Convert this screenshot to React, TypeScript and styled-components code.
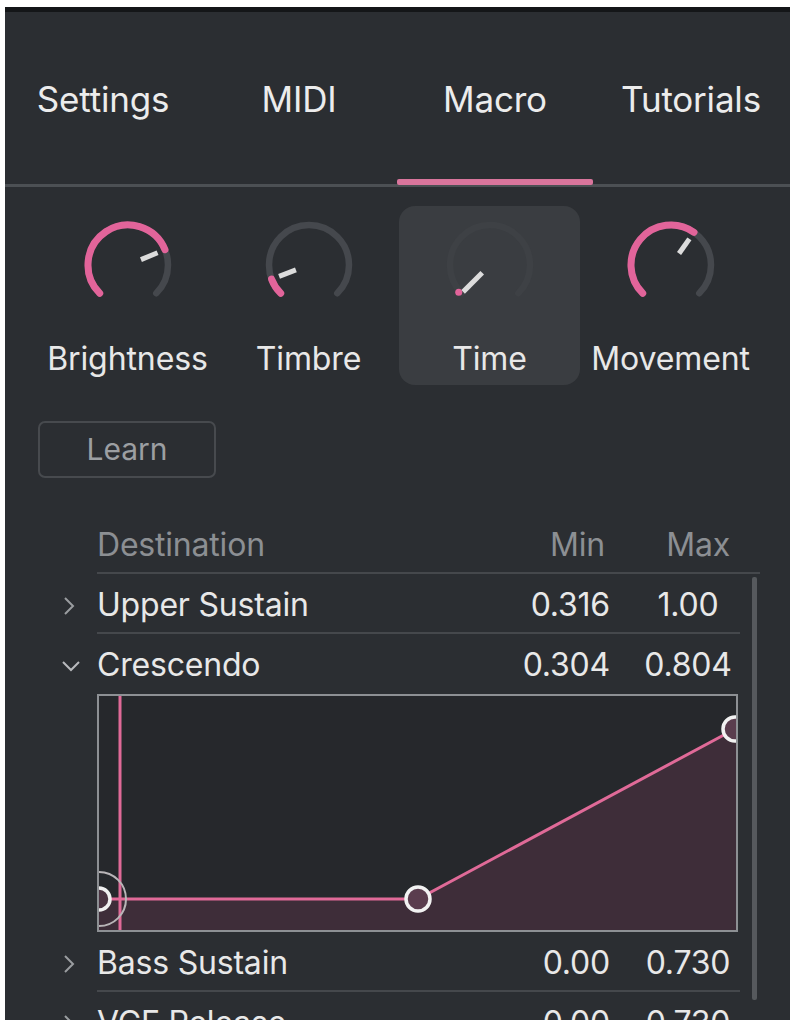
import React from "react";
import styled, { createGlobalStyle } from "styled-components";

const GlobalStyle = createGlobalStyle`
  html, body { margin: 0; padding: 0; background: #ffffff; }
  body { font-family: Inter, "Noto Sans", sans-serif; }
  * { box-sizing: border-box; }
`;

const PINK = "#e2649a";

const Page = styled.div`
  padding: 7px 3px 0 5px;
  height: 1029px;
  overflow: hidden;
`;

const Panel = styled.div`
  width: 785px;
  height: 1013px;
  background: #2b2e32;
  border-top: 5px solid #141618;
  overflow: hidden;
  display: flex;
  flex-direction: column;
  position: relative;
`;

const TabBar = styled.div`
  display: grid;
  grid-template-columns: repeat(4, 196px);
  height: 175px;
  border-bottom: 3px solid #4c5054;
  flex-shrink: 0;
`;

const Tab = styled.div<{ $active?: boolean }>`
  position: relative;
  display: flex;
  align-items: center;
  justify-content: center;
  font-size: 35px;
  color: #ececec;
  letter-spacing: -0.2px;
  padding-top: 2px;
  &::after {
    content: "";
    display: ${(p) => (p.$active ? "block" : "none")};
    position: absolute;
    left: 0;
    right: 0;
    bottom: -1px;
    height: 6px;
    background: #d9759c;
    border-radius: 2px;
  }
`;

const KnobRow = styled.div`
  display: grid;
  grid-template-columns: repeat(4, 181px);
  padding: 19px 0 0 32px;
  flex-shrink: 0;
`;

const KnobCard = styled.div<{ $selected?: boolean }>`
  height: 179px;
  border-radius: 16px;
  background: ${(p) => (p.$selected ? "#3a3d41" : "transparent")};
  display: flex;
  flex-direction: column;
  align-items: center;
  padding-top: 9px;
`;

const KnobLabel = styled.div`
  margin-top: 28px;
  font-size: 32px;
  color: #e8e8e8;
  letter-spacing: -0.1px;
  line-height: 1;
`;

const LearnButton = styled.button`
  margin: 36px 0 0 33px;
  width: 178px;
  height: 57px;
  border: 2px solid #474a4e;
  border-radius: 7px;
  background: transparent;
  color: #9c9fa2;
  font-family: Inter, "Noto Sans", sans-serif;
  font-size: 30px;
  padding: 0 0 2px 0;
  flex-shrink: 0;
`;

const Table = styled.div`
  position: relative;
  margin: 41px 0 0 50px;
  width: 705px;
  flex-shrink: 0;
`;

const HeaderRow = styled.div`
  display: grid;
  grid-template-columns: 1fr 136px 124px;
  align-items: center;
  height: 55px;
  margin-left: 42px;
  border-bottom: 2px solid #45484c;
  color: #8c8f93;
  font-size: 32px;
  letter-spacing: -0.2px;
`;

const HeadCell = styled.div<{ $right?: number }>`
  text-align: ${(p) => (p.$right !== undefined ? "right" : "left")};
  padding-right: ${(p) => p.$right ?? 0}px;
  padding-bottom: 2px;
`;

const Row = styled.div`
  display: flex;
  align-items: stretch;
  height: 60px;
  margin-right: 20px;
`;

const ChevronBox = styled.div`
  width: 42px;
  display: flex;
  align-items: center;
  padding-left: 6px;
  padding-top: 4px;
`;

const RowBody = styled.div<{ $line?: boolean }>`
  flex: 1;
  display: grid;
  grid-template-columns: 1fr 136px 104px;
  align-items: center;
  border-bottom: ${(p) => (p.$line ? "2px solid #45484c" : "2px solid transparent")};
  color: #e8e8e8;
  font-size: 32px;
  letter-spacing: -0.2px;
  padding-top: 5px;
`;

const Cell = styled.div<{ $align?: "left" | "right" | "center"; $pr?: number }>`
  text-align: ${(p) => p.$align ?? "left"};
  padding-right: ${(p) => p.$pr ?? 0}px;
  padding-bottom: 2px;
  white-space: nowrap;
`;

const GraphWrap = styled.div`
  margin-left: 42px;
  width: 641px;
  height: 238px;
  border: 2px solid #8d9094;
  background: #26282c;
  overflow: hidden;
`;

const ScrollBar = styled.div`
  position: absolute;
  right: 3px;
  top: 58px;
  width: 5px;
  height: 423px;
  background: #56595d;
  border-radius: 2px;
`;

const polar = (cx: number, cy: number, r: number, deg: number) => {
  const a = (deg * Math.PI) / 180;
  return [cx + r * Math.cos(a), cy - r * Math.sin(a)];
};

const arcPath = (r: number, from: number, to: number) => {
  const [x1, y1] = polar(50, 50, r, from);
  const [x2, y2] = polar(50, 50, r, to);
  const large = from - to > 180 ? 1 : 0;
  return `M ${x1} ${y1} A ${r} ${r} 0 ${large} 1 ${x2} ${y2}`;
};

type KnobProps = {
  value: number;
  track?: string;
  inner?: number;
  outer?: number;
};

const Knob: React.FC<KnobProps> = ({ value, track = "#45484d", inner = 14, outer = 32 }) => {
  const start = 225;
  const end = -45;
  const v = start - 270 * value;
  const [px1, py1] = polar(50, 50, inner, v);
  const [px2, py2] = polar(50, 50, outer, v);
  const [sx, sy] = polar(50, 50, 40, start);
  return (
    <svg width="100" height="100" viewBox="0 0 100 100">
      <path d={arcPath(40, start, end)} fill="none" stroke={track} strokeWidth="6.5" strokeLinecap="round" />
      {value > 0.01 ? (
        <path d={arcPath(40, start, v)} fill="none" stroke={PINK} strokeWidth="7" strokeLinecap="round" />
      ) : (
        <circle cx={sx - 3} cy={sy - 1} r="3.5" fill={PINK} />
      )}
      <line x1={px1} y1={py1} x2={px2} y2={py2} stroke="#dcdcdc" strokeWidth="5" strokeLinecap="butt" />
    </svg>
  );
};

const Chevron: React.FC<{ open?: boolean }> = ({ open }) =>
  open ? (
    <svg width="20" height="14" viewBox="0 0 20 14">
      <polyline points="2,3 10,11 18,3" fill="none" stroke="#b8babd" strokeWidth="2" />
    </svg>
  ) : (
    <svg width="16" height="20" viewBox="0 0 16 20">
      <polyline points="4,2 12,10 4,18" fill="none" stroke="#9a9da0" strokeWidth="2" />
    </svg>
  );

const Graph: React.FC = () => (
  <svg width="637" height="234" viewBox="0 0 637 234">
    <polygon points="-2,203 319,203 636,33 640,33 640,240 -2,240" fill="#3e2d39" />
    <line x1="21" y1="0" x2="21" y2="240" stroke="#e06a98" strokeWidth="3" />
    <polyline points="-2,203 319,203 636,33" fill="none" stroke="#e06a98" strokeWidth="3" />
    <circle cx="0" cy="203" r="27" fill="none" stroke="#b9b5b8" strokeWidth="2" />
    <circle cx="0" cy="203" r="11" fill="#4a3442" stroke="#f0f0f0" strokeWidth="3.5" />
    <circle cx="319" cy="203" r="12" fill="#5a3d4e" stroke="#f2f2f2" strokeWidth="3.5" />
    <circle cx="636" cy="33" r="12" fill="#5a3d4e" stroke="#f2f2f2" strokeWidth="3.5" />
  </svg>
);

type Dest = { name: string; min: string; max: string; open?: boolean };

const rows: Dest[] = [
  { name: "Upper Sustain", min: "0.316", max: "1.00" },
  { name: "Crescendo", min: "0.304", max: "0.804", open: true },
  { name: "Bass Sustain", min: "0.00", max: "0.730" },
  { name: "VCF Release", min: "0.00", max: "0.730" },
];

const knobs = [
  { label: "Brightness", value: 0.75 },
  { label: "Timbre", value: 0.09 },
  { label: "Time", value: 0, selected: true },
  { label: "Movement", value: 0.63 },
];

export default function App() {
  return (
    <>
      <GlobalStyle />
      <Page>
        <Panel>
          <TabBar>
            <Tab>Settings</Tab>
            <Tab>MIDI</Tab>
            <Tab $active>Macro</Tab>
            <Tab>Tutorials</Tab>
          </TabBar>
          <KnobRow>
            {knobs.map((k) => (
              <KnobCard key={k.label} $selected={k.selected}>
                {k.selected ? (
                  <Knob value={k.value} track="#3e4145" inner={11} outer={38} />
                ) : (
                  <Knob value={k.value} />
                )}
                <KnobLabel>{k.label}</KnobLabel>
              </KnobCard>
            ))}
          </KnobRow>
          <LearnButton>Learn</LearnButton>
          <Table>
            <HeaderRow>
              <HeadCell>Destination</HeadCell>
              <HeadCell $right={31}>Min</HeadCell>
              <HeadCell $right={30}>Max</HeadCell>
            </HeaderRow>
            {rows.map((r) => (
              <React.Fragment key={r.name}>
                <Row>
                  <ChevronBox>
                    <Chevron open={r.open} />
                  </ChevronBox>
                  <RowBody $line={!r.open}>
                    <Cell>{r.name}</Cell>
                    <Cell $align="right" $pr={26}>{r.min}</Cell>
                    <Cell $align="center">{r.max}</Cell>
                  </RowBody>
                </Row>
                {r.open && (
                  <GraphWrap>
                    <Graph />
                  </GraphWrap>
                )}
              </React.Fragment>
            ))}
            <ScrollBar />
          </Table>
        </Panel>
      </Page>
    </>
  );
}
